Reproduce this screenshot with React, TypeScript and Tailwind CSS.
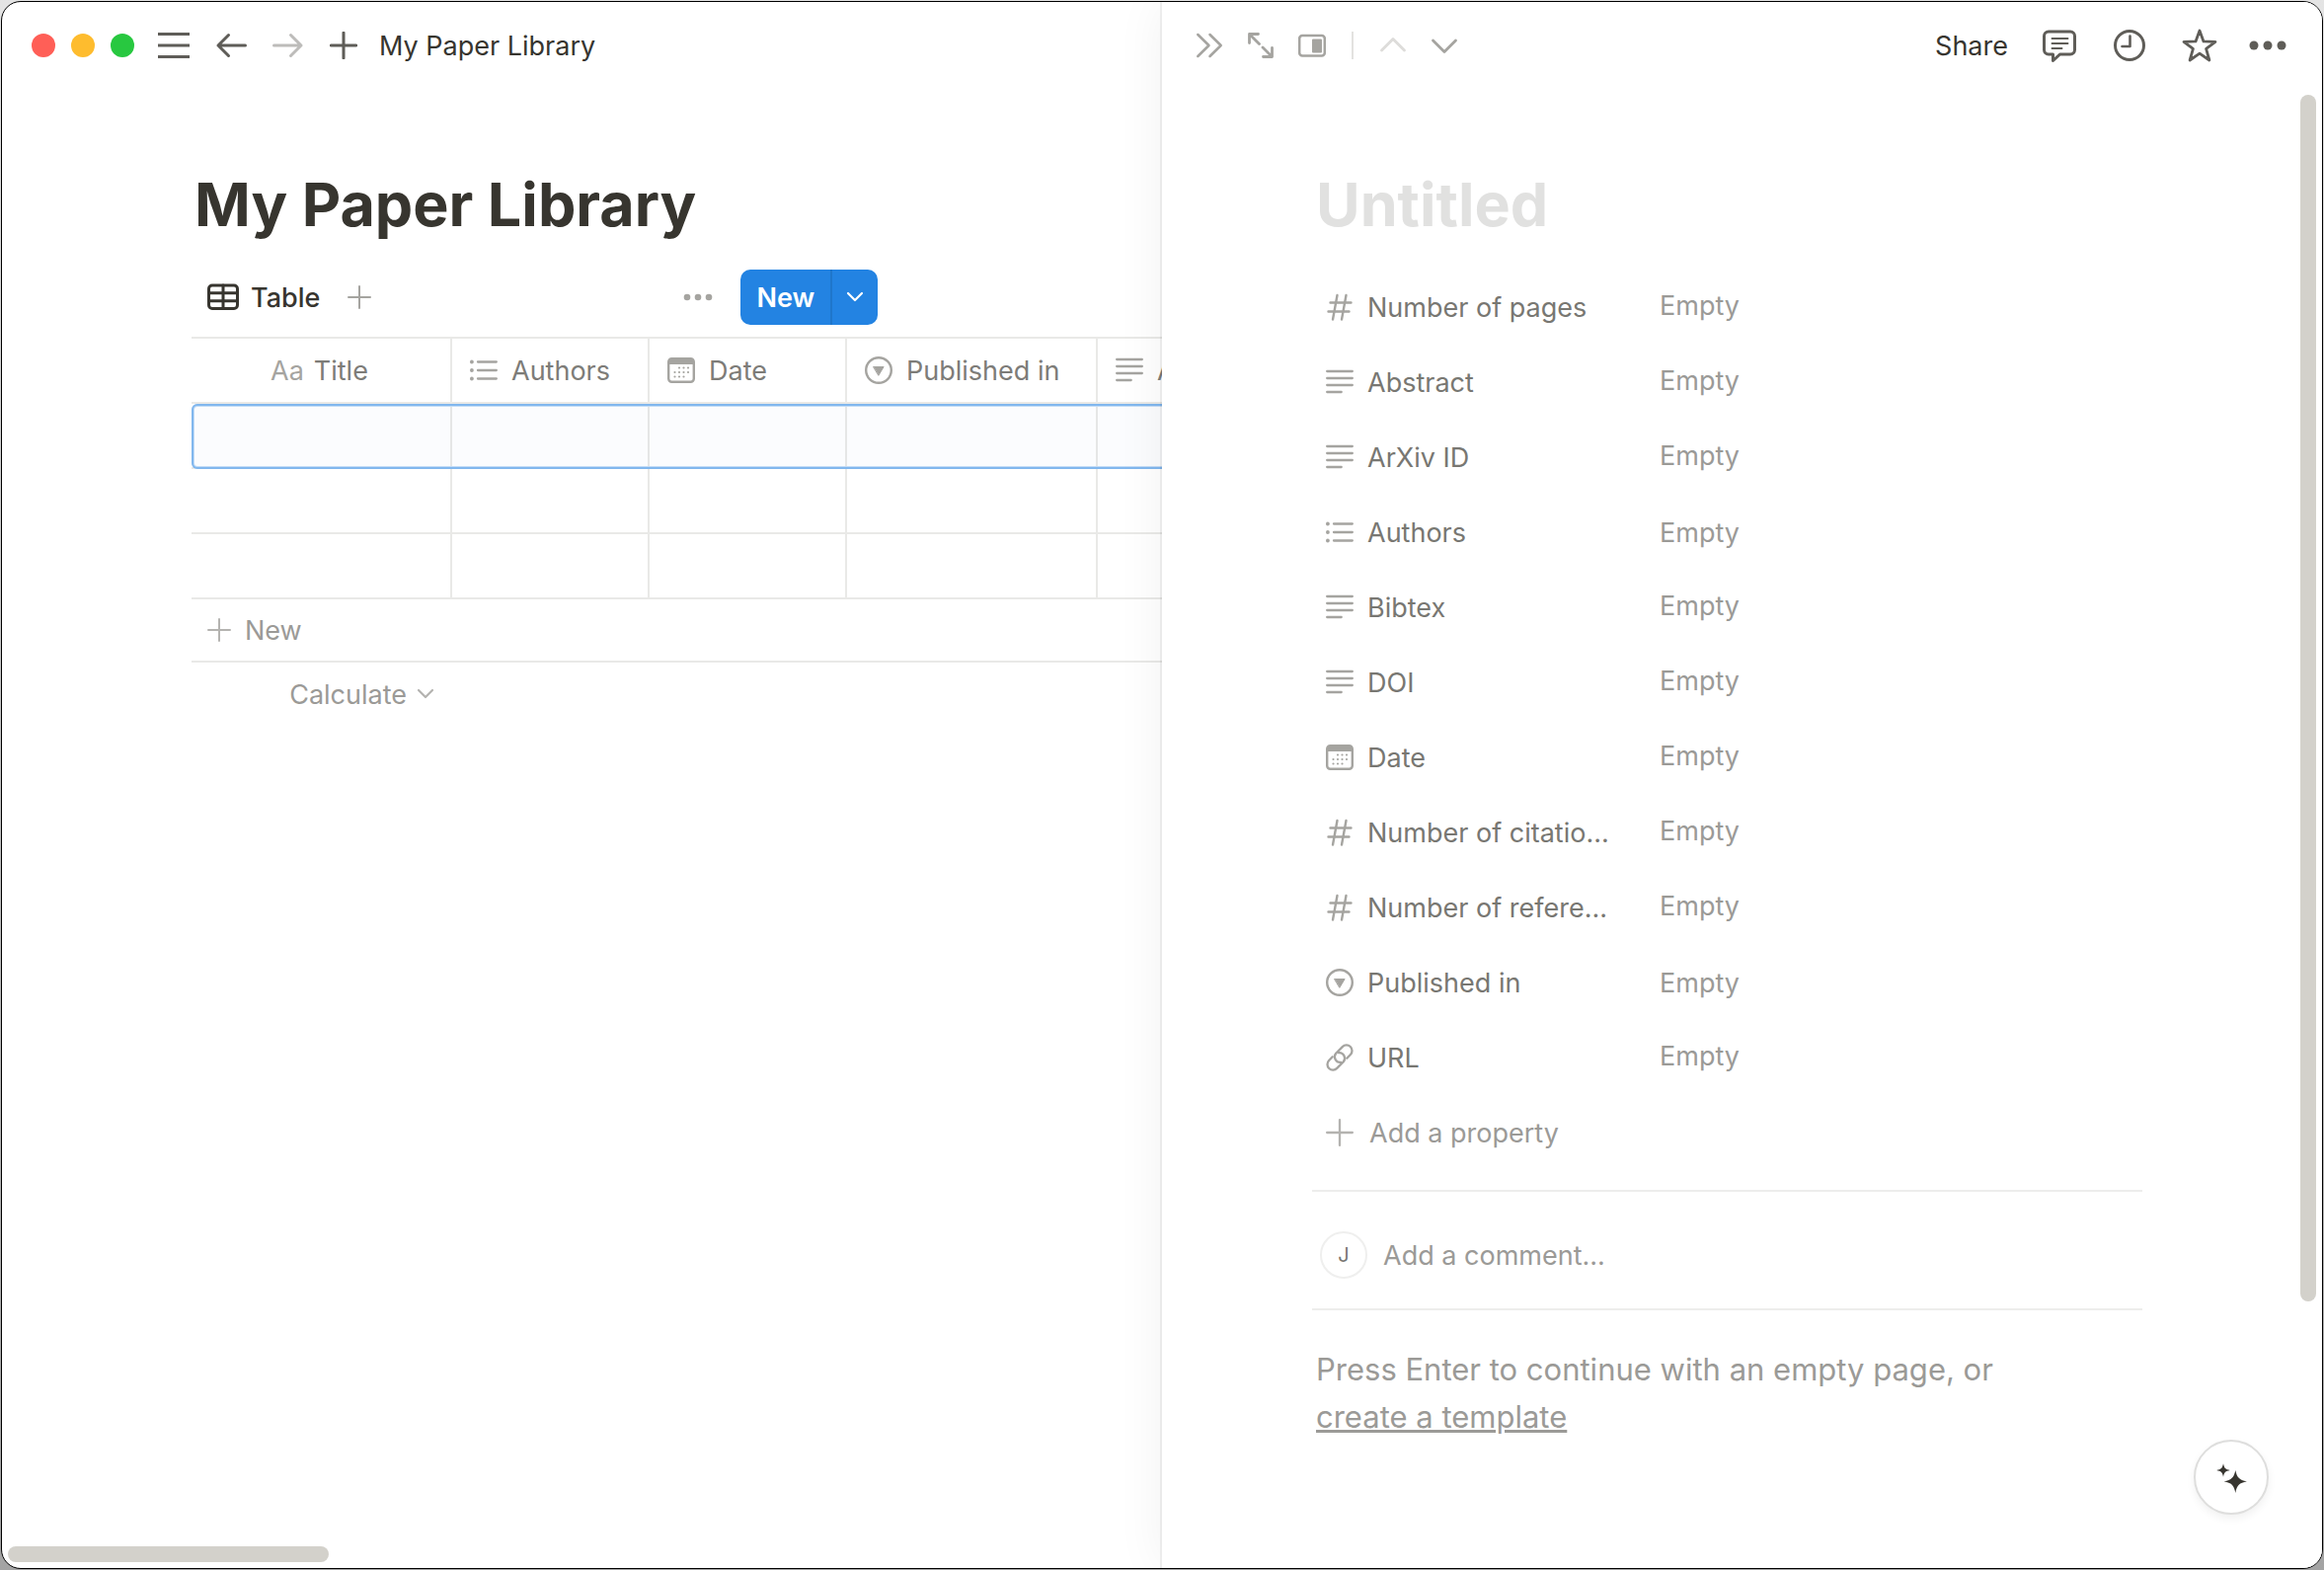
import { useState, type ReactNode, type SVGProps } from "react";

type IconProps = SVGProps<SVGSVGElement>;
type PropertyKind = "number" | "text" | "multi" | "date" | "select" | "url";

function Svg({ children, ...props }: IconProps & { children: ReactNode }) {
  return (
    <svg
      fill="none"
      stroke="currentColor"
      strokeLinecap="round"
      strokeLinejoin="round"
      strokeWidth={2.5}
      aria-hidden="true"
      {...props}
    >
      {children}
    </svg>
  );
}

function NumberIcon() {
  return (
    <Svg width={28} height={28} viewBox="0 0 28 28" strokeWidth={2.4}>
      <path d="M11.5 2 7 26.5M20.5 2 16 26.5M4.5 9.5h21M2.5 18.5h21" />
    </Svg>
  );
}

function TextIcon() {
  return (
    <Svg width={28} height={28} viewBox="0 0 28 28" strokeWidth={2.3}>
      <path d="M1.2 3h25.6M1.2 10h25.6M1.2 17h25.6M1.2 24h14.5" />
    </Svg>
  );
}

function MultiIcon() {
  return (
    <Svg width={28} height={28} viewBox="0 0 28 28" strokeWidth={2.3}>
      <path d="M8 5.5h18.8M8 14h18.8M8 22.5h18.8" />
      <g fill="currentColor" stroke="none">
        <circle cx="1.9" cy="5.5" r="1.9" />
        <circle cx="1.9" cy="14" r="1.9" />
        <circle cx="1.9" cy="22.5" r="1.9" />
      </g>
    </Svg>
  );
}

function DateIcon() {
  return (
    <Svg width={28} height={28} viewBox="0 0 28 28">
      <rect x="1.2" y="2.2" width="25.6" height="23.6" rx="3.2" strokeWidth={2.4} />
      <path d="M1 8V5.5A3.5 3.5 0 0 1 4.5 2h19A3.5 3.5 0 0 1 27 5.5V8z" fill="currentColor" stroke="none" />
      <path
        d="M12 11.5h.01M16.5 11.5h.01M21 11.5h.01M7.5 16h.01M12 16h.01M16.5 16h.01M21 16h.01M7.5 20.5h.01M12 20.5h.01M16.5 20.5h.01"
        strokeWidth={2.2}
      />
    </Svg>
  );
}

function SelectIcon() {
  return (
    <Svg width={28} height={28} viewBox="0 0 28 28" strokeWidth={2.4}>
      <circle cx="14" cy="14" r="12.8" />
      <path d="M8.9 10.5h10.2L14 19z" fill="currentColor" strokeWidth={1} />
    </Svg>
  );
}

function LinkIcon() {
  return (
    <Svg width={28} height={28} viewBox="0 0 28 28" strokeWidth={2.3}>
      <path d="M15.2 18.9A5.6 5.6 0 0 1 10.2 9.8L16.8 3.1A5.6 5.6 0 0 1 24.9 11L21.3 14.7" />
      <path d="M12.8 9.1A5.6 5.6 0 0 1 17.8 18.2L11.200 24.900A5.600 5.600 0 0 1 3.100 17L6.700 13.300" />
    </Svg>
  );
}

function PlusIcon({ size = 24, strokeWidth = 2 }: { size?: number; strokeWidth?: number }) {
  return (
    <Svg width={size} height={size} viewBox="0 0 24 24" strokeWidth={strokeWidth}>
      <path d="M12 1v22M1 12h22" />
    </Svg>
  );
}

function ChevronIcon({ className }: { className?: string }) {
  return (
    <Svg width={18} height={18} viewBox="0 0 18 18" strokeWidth={2.2} className={className}>
      <path d="m2 5 7 7 7-7" />
    </Svg>
  );
}

function PropertyIcon({ kind }: { kind: PropertyKind }) {
  switch (kind) {
    case "number":
      return <NumberIcon />;
    case "multi":
      return <MultiIcon />;
    case "date":
      return <DateIcon />;
    case "select":
      return <SelectIcon />;
    case "url":
      return <LinkIcon />;
    default:
      return <TextIcon />;
  }
}

const columns: { name: string; kind: PropertyKind; width: string }[] = [
  { name: "Authors", kind: "multi", width: "w-[200px]" },
  { name: "Date", kind: "date", width: "w-[200px]" },
  { name: "Published in", kind: "select", width: "w-[254px]" },
  { name: "Abstract", kind: "text", width: "w-[400px]" },
];

const properties: { name: string; kind: PropertyKind }[] = [
  { name: "Number of pages", kind: "number" },
  { name: "Abstract", kind: "text" },
  { name: "ArXiv ID", kind: "text" },
  { name: "Authors", kind: "multi" },
  { name: "Bibtex", kind: "text" },
  { name: "DOI", kind: "text" },
  { name: "Date", kind: "date" },
  { name: "Number of citatio...", kind: "number" },
  { name: "Number of refere...", kind: "number" },
  { name: "Published in", kind: "select" },
  { name: "URL", kind: "url" },
];

function WindowBar() {
  return (
    <header className="flex h-[88px] items-center pl-[30px] text-[#5f5d58]">
      <div className="flex gap-4">
        <span className="size-6 rounded-full bg-[#ff5f57]" />
        <span className="size-6 rounded-full bg-[#febc2e]" />
        <span className="size-6 rounded-full bg-[#28c840]" />
      </div>
      <button type="button" aria-label="Toggle sidebar" className="ml-6">
        <Svg width={32} height={28} viewBox="0 0 32 28" strokeWidth={3} strokeLinecap="butt">
          <path d="M0 2.5h32M0 14h32M0 25.5h32" />
        </Svg>
      </button>
      <button type="button" aria-label="Back" className="ml-[26px]">
        <Svg width={32} height={28} viewBox="0 0 32 28" strokeWidth={3}>
          <path d="M13.5 3.5 3 14l10.5 10.5M3 14h27.5" />
        </Svg>
      </button>
      <button type="button" aria-label="Forward" className="ml-[26px] text-[#bdbcba]">
        <Svg width={32} height={28} viewBox="0 0 32 28" strokeWidth={3}>
          <path d="M18.5 3.5 29 14 18.5 24.5M29 14H1.5" />
        </Svg>
      </button>
      <button type="button" aria-label="New tab" className="ml-[26px]">
        <PlusIcon size={28} strokeWidth={2.6} />
      </button>
      <span className="ml-[22px] text-[#37352f]">My Paper Library</span>
    </header>
  );
}

function LibraryTable() {
  return (
    <table className="w-[1318px] table-fixed border-separate border-spacing-0 border-t-2 border-[#e9e9e7]">
      <thead>
        <tr className="h-[66px] text-left text-[#7d7c78]">
          <th scope="col" className="w-[264px] border-r-2 border-b-2 border-[#e9e9e7] p-0 pl-20 font-normal">
            <span className="text-[#a5a4a0]">Aa</span>
            <span className="ml-2.5">Title</span>
          </th>
          {columns.map((c) => (
            <th
              key={c.name}
              scope="col"
              className={`${c.width} border-r-2 border-b-2 border-[#e9e9e7] p-0 pl-[18px] font-normal`}
            >
              <span className="flex items-center gap-3.5">
                <span className="text-[#a5a4a0]">
                  <PropertyIcon kind={c.kind} />
                </span>
                {c.name}
              </span>
            </th>
          ))}
        </tr>
      </thead>
      <tbody>
        {[0, 1, 2].map((row) => (
          <tr key={row} className="relative h-[66px]">
            <td className="border-r-2 border-b-2 border-[#e9e9e7] p-0">
              {row === 0 && (
                <span className="pointer-events-none absolute inset-0 rounded-[6px] bg-[#2a6fd6]/2 shadow-[inset_0_0_0_2px_#81b7ee,inset_0_0_0_3px_#c3dcf6]" />
              )}
            </td>
            {columns.map((c) => (
              <td key={c.name} className="border-r-2 border-b-2 border-[#e9e9e7] p-0" />
            ))}
          </tr>
        ))}
      </tbody>
    </table>
  );
}

function LibraryPane() {
  return (
    <main className="relative w-1/2 overflow-hidden">
      <WindowBar />
      <div className="pl-48">
        <h1 className="mt-[79px] pl-[3px] text-[61px] leading-[76px] font-bold text-[#37352f]">My Paper Library</h1>
        <div className="mt-7 flex h-14 items-center pl-4">
          <button type="button" className="flex items-center gap-3 font-medium text-[#37352f]">
            <Svg width={32} height={28} viewBox="0 0 32 28" strokeWidth={3}>
              <rect x="1.5" y="2" width="29" height="23.5" rx="3.5" />
              <path d="M1.5 9.8h29M1.5 17.7h29M16 2v23.5" />
            </Svg>
            Table
          </button>
          <button type="button" aria-label="Add view" className="ml-7 text-[#a5a4a0]">
            <PlusIcon />
          </button>
          <button type="button" aria-label="View options" className="ml-[316px] text-[#a5a4a0]">
            <svg width="30" height="8" viewBox="0 0 30 8" fill="currentColor" aria-hidden="true">
              <circle cx="4" cy="4" r="3.3" />
              <circle cx="15" cy="4" r="3.3" />
              <circle cx="26" cy="4" r="3.3" />
            </svg>
          </button>
          <div className="ml-7 flex h-14 overflow-hidden rounded-[10px] bg-[#2383e2] text-white">
            <button type="button" className="w-[93px] border-r-2 border-[#1f76cb] font-semibold">
              New
            </button>
            <button type="button" aria-label="New options" className="flex w-[46px] items-center justify-center">
              <ChevronIcon />
            </button>
          </div>
        </div>
        <div className="mt-3">
          <LibraryTable />
          <button
            type="button"
            className="flex h-16 w-full items-center gap-3.5 border-b-2 border-[#e9e9e7] pl-4 text-[#9b9a97]"
          >
            <span className="text-[#b4b3b0]">
              <PlusIcon />
            </span>
            New
          </button>
          <button type="button" className="flex h-16 w-[264px] items-center justify-end gap-2.5 pr-[18px] text-[#9b9a97]">
            Calculate
            <ChevronIcon className="text-[#b4b3b0]" />
          </button>
        </div>
      </div>
      <div className="absolute bottom-1.5 left-1.5 h-4 w-[325px] rounded-full bg-[#d3d1cb]" />
    </main>
  );
}

function PeekBar() {
  const [starred, setStarred] = useState(false);

  return (
    <header className="flex h-[88px] items-center justify-between pr-9 pl-[34px] text-[#5f5d58]">
      <div className="flex items-center text-[#a5a4a0]">
        <button type="button" aria-label="Close peek">
          <Svg width={28} height={28} viewBox="0 0 28 28">
            <path d="M2.3 3 13.5 14 2.3 25M14.5 3 25.7 14 14.5 25" />
          </Svg>
        </button>
        <button type="button" aria-label="Open as full page" className="ml-6">
          <Svg width={28} height={28} viewBox="0 0 28 28" strokeWidth={2.8}>
            <path d="M11.5 2.5h-9v9M3 3l9.5 9.5M16.5 25.5h9v-9M25 25 16 16" />
          </Svg>
        </button>
        <button type="button" aria-label="Switch peek mode" className="ml-6">
          <Svg width={28} height={28} viewBox="0 0 28 28">
            <rect x="1.2" y="4" width="25.6" height="20.5" rx="3" />
            <rect x="14" y="7.5" width="10" height="14" rx="1" fill="currentColor" stroke="none" />
          </Svg>
        </button>
        <span className="ml-[26px] h-7 w-0.5 bg-[#e3e2e0]" />
        <button type="button" aria-label="Previous page" className="ml-[26px] text-[#dddcda]">
          <Svg width={28} height={28} viewBox="0 0 28 28" strokeWidth={2.8}>
            <path d="M2.5 19 14 7.5 25.5 19" />
          </Svg>
        </button>
        <button type="button" aria-label="Next page" className="ml-6">
          <Svg width={28} height={28} viewBox="0 0 28 28" strokeWidth={2.8}>
            <path d="M2.5 9 14 20.5 25.5 9" />
          </Svg>
        </button>
      </div>
      <div className="flex items-center">
        <button type="button" className="text-[#37352f]">
          Share
        </button>
        <button type="button" aria-label="Comments" className="ml-[34px]">
          <Svg width={36} height={36} viewBox="0 0 36 36" strokeWidth={3}>
            <path d="M7 4h22a4.5 4.5 0 0 1 4.5 4.5v14A4.5 4.5 0 0 1 29 27H18.5l-7 6.5V27H7a4.5 4.5 0 0 1-4.5-4.5v-14A4.5 4.5 0 0 1 7 4z" />
            <path d="M10.5 11h16M10.5 16h16M10.5 21h10" strokeWidth={1.9} />
          </Svg>
        </button>
        <button type="button" aria-label="Updates" className="ml-[35px]">
          <Svg width={36} height={36} viewBox="0 0 36 36" strokeWidth={3}>
            <circle cx="18" cy="18" r="14.5" />
            <path d="M18.5 8.5V19H10.5" strokeWidth={2.6} />
          </Svg>
        </button>
        <button
          type="button"
          aria-label="Favorite"
          aria-pressed={starred}
          onClick={() => setStarred((s) => !s)}
          className="ml-[35px]"
        >
          <Svg width={36} height={36} viewBox="0 0 36 36" strokeWidth={2.8}>
            <path
              d="M18 3 22 13.9 34 14.3 24.6 21.3 27.9 33 18 26.2 8.1 33 11.4 21.3 2 14.3 14 13.9z"
              fill={starred ? "currentColor" : "none"}
            />
          </Svg>
        </button>
        <button type="button" aria-label="More" className="ml-8">
          <svg width="38" height="10" viewBox="0 0 38 10" fill="currentColor" aria-hidden="true">
            <circle cx="5" cy="5" r="4.5" />
            <circle cx="19" cy="5" r="4.5" />
            <circle cx="33" cy="5" r="4.5" />
          </svg>
        </button>
      </div>
    </header>
  );
}

function PeekPane() {
  const [title, setTitle] = useState("");
  const [comment, setComment] = useState("");

  return (
    <aside className="relative w-1/2 bg-white shadow-[0_0_0_2px_rgba(15,15,15,0.06),0_0_48px_rgba(15,15,15,0.06)]">
      <PeekBar />
      <div className="pr-[182px] pl-[152px]">
        <input
          aria-label="Page title"
          value={title}
          onChange={(e) => setTitle(e.target.value)}
          placeholder="Untitled"
          className="mt-[79px] block h-[76px] w-full pl-1 text-[61px] font-bold text-[#37352f] outline-none placeholder:text-[#e1e1e0]"
        />
        <dl className="mt-7">
          {properties.map((p) => (
            <div key={p.name} className="flex h-[76px] items-center">
              <dt className="flex w-[352px] items-center gap-3.5 pl-3.5 text-[#787772]">
                <span className="text-[#a5a4a0]">
                  <PropertyIcon kind={p.kind} />
                </span>
                {p.name}
              </dt>
              <dd className={p.kind === "multi" || p.kind === "select" ? "text-[#9b9a97]" : "pb-1 text-[#9b9a97]"}>
                Empty
              </dd>
            </div>
          ))}
        </dl>
        <button type="button" className="flex h-[76px] items-center gap-4 pl-3.5 text-[#9b9a97]">
          <span className="text-[#b4b3b0]">
            <PlusIcon size={28} />
          </span>
          Add a property
        </button>
        <div className="mt-5 flex items-center gap-4 border-y-2 border-[#ededec] pt-10 pr-2 pb-[30px] pl-2">
          <span className="flex size-12 items-center justify-center rounded-full border-2 border-[#efefee] text-[20px] text-[#787772]">
            J
          </span>
          <input
            aria-label="Comment"
            value={comment}
            onChange={(e) => setComment(e.target.value)}
            placeholder="Add a comment..."
            className="h-12 flex-1 text-[#37352f] outline-none placeholder:text-[#9b9a97]"
          />
        </div>
        <p className="mt-9 pl-1 text-[31px] leading-[48px] text-[#9b9a97]">
          Press Enter to continue with an empty page, or
          <br />
          <a href="#template" className="underline">
            create a template
          </a>
        </p>
      </div>
      <div className="absolute top-[94px] right-1.5 h-[1222px] w-4 rounded-full bg-[#d3d1cb]" />
      <button
        type="button"
        aria-label="Ask AI"
        className="absolute right-[54px] bottom-[54px] flex size-[76px] items-center justify-center rounded-full border-2 border-[#dededd] bg-white text-[#37352f] shadow-[0_4px_8px_rgba(15,15,15,0.06)]"
      >
        <svg width="36" height="36" viewBox="0 0 36 36" fill="currentColor" aria-hidden="true">
          <path d="M22.3 11C23.9 18.5 26.1 20.7 33.9 22.3 26.1 23.9 23.9 26.1 22.3 33.9 20.7 26.1 18.5 23.9 10.7 22.3 18.5 20.7 20.7 18.5 22.3 11z" />
          <path d="M10 4.3C11 8.9 12 10 16.8 11 12 12 11 13 10 17.7 9 13 8 12 3.2 11 8 10 9 8.9 10 4.3z" />
        </svg>
      </button>
    </aside>
  );
}

export default function App() {
  return (
    <div className="flex min-h-screen bg-linear-to-b from-[#e4e4e4] to-[#a3a3a3] p-px font-['Inter','Noto_Sans',sans-serif] text-[27px] leading-[37px]">
      <div className="flex flex-1 overflow-hidden rounded-[20px] border border-black bg-white">
        <LibraryPane />
        <PeekPane />
      </div>
    </div>
  );
}
